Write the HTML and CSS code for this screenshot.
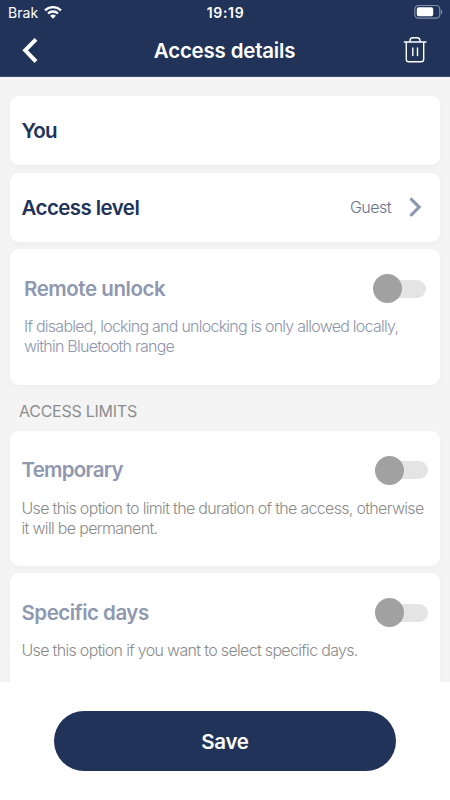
FILE: index.html
```html
<!DOCTYPE html>
<html lang="en">
<head>
<meta charset="utf-8">
<title>Access details</title>
<link rel="stylesheet" href="styles.css">
</head>
<body>
<div class="screen">
  <header class="header">
    <div class="status">
      <div class="carrier"><span>Brak</span>
        <svg class="wifi" width="18" height="14" viewBox="0 0 18 14" fill="none" stroke="#fff" stroke-width="2.3"><path d="M1 4.4a11.4 11.4 0 0 1 16 0M4 7.5a7.2 7.2 0 0 1 10 0"/><path d="M9 12.7 6.1 9.8a4.2 4.2 0 0 1 5.8 0z" fill="#fff" stroke="none"/></svg>
      </div>
      <span class="time">19:19</span>
      <svg class="battery" width="30" height="15" viewBox="0 0 30 15"><rect x="1.8" y=".5" width="25" height="12.6" rx="3.6" fill="none" stroke="#8290ad" stroke-width="1.2"/><rect x="3.8" y="2.3" width="16.4" height="9" rx="1.8" fill="#fff"/><path d="M28 4.5v4.8c1.7-.7 1.7-4.1 0-4.8z" fill="#8290ad"/></svg>
    </div>
    <div class="nav">
      <svg class="back" width="17" height="26" viewBox="0 0 17 26" fill="none" stroke="#fff" stroke-width="4"><path d="M15 1.4 4.2 12.3 15 23.5"/></svg>
      <h1 class="title">Access details</h1>
      <svg class="trash" width="24" height="27" viewBox="0 0 24 27" fill="none" stroke="#fff" stroke-width="1.4" stroke-linecap="round" stroke-linejoin="round"><path d="M1.3 5h21.7M3.3 5v17.2a2.6 2.6 0 0 0 2.6 2.6h12.2a2.6 2.6 0 0 0 2.6-2.6V5M7 4.7V3.7a3 3 0 0 1 3-3h4a3 3 0 0 1 3 3v1M9.8 11v7.5M14.5 11v7.5"/></svg>
    </div>
  </header>
  <main class="content">
    <section class="card row"><h2 class="name tight">You</h2></section>
    <section class="card row"><h2 class="name level">Access level</h2>
      <span class="value">Guest</span>
      <svg class="chevron" width="13" height="20" viewBox="0 0 13 20" fill="none" stroke="#9198b2" stroke-width="3.2" stroke-linecap="round"><path d="m2.4 2.3 7.8 7.8-7.8 7.8"/></svg>
    </section>
    <section class="card option remote">
      <div class="head"><h2 class="name muted">Remote unlock</h2><span class="switch"></span></div>
      <p class="desc blue">If disabled, locking and unlocking is only allowed locally,<br>within Bluetooth range</p>
    </section>
    <h3 class="group">ACCESS LIMITS</h3>
    <section class="card option">
      <div class="head"><h2 class="name muted tight">Temporary</h2><span class="switch"></span></div>
      <p class="desc">Use this option to limit the duration of the access, otherwise<br>it will be permanent.</p>
    </section>
    <section class="card option">
      <div class="head"><h2 class="name muted days">Specific days</h2><span class="switch"></span></div>
      <p class="desc">Use this option if you want to select specific days.</p>
    </section>
  </main>
  <footer class="footer"><button class="save">Save</button></footer>
</div>
</body>
</html>
```
FILE: styles.css
```css
* { box-sizing: border-box; }
body { margin: 0; font-family: Inter, "Liberation Sans", sans-serif; }
h1, h2, h3, p { margin: 0; }
svg { display: block; flex: none; }
.screen { width: 450px; height: 800px; display: flex; flex-direction: column; overflow: hidden; background: #f4f4f4; }
.header { flex: none; height: 77px; background: #213358; border-bottom: 1px solid #38496c; color: #fff; }
.status { height: 25px; display: grid; grid-template-columns: 1fr auto 1fr; align-items: center; padding: 0 7px 0 8px; }
.carrier { display: flex; align-items: center; gap: 6px; font-size: 14px; letter-spacing: 0.05px; }
.time { font-size: 14px; font-weight: 600; letter-spacing: 0.7px; }
.battery { justify-self: end; }
.nav { height: 51px; display: grid; grid-template-columns: 1fr auto 1fr; align-items: center; padding: 0 23px 0 21px; }
.title { font-size: 20.5px; font-weight: 600; letter-spacing: -0.2px; margin-right: -1px; }
.trash { justify-self: end; }
.content { flex: 1; min-height: 0; overflow: hidden; padding: 19px 10px 0; display: flex; flex-direction: column; gap: 7.5px; }
.card { flex: none; background: #fff; border-radius: 9px; box-shadow: 0 2px 7px rgba(0, 0, 0, 0.03); }
.row { height: 69.2px; display: flex; align-items: center; padding: 0 18px 0 11.5px; }
.name { font-size: 20.5px; line-height: 26px; font-weight: 600; color: #213358; letter-spacing: -0.45px; }
.level { letter-spacing: -0.57px; padding-top: 1px; }
.tight { letter-spacing: -0.75px; }
.days { letter-spacing: -0.5px; }
.muted { color: #8f98b0; }
.value { margin-left: auto; margin-right: 18px; font-size: 16px; font-weight: 300; letter-spacing: -0.5px; color: #66718f; }
.option { height: 135.2px; padding: 25px 12px 0 11.5px; }
.remote { padding: 25px 14px 0; }
.head { display: flex; justify-content: space-between; align-items: center; height: 29px; }
.switch { width: 53px; height: 29px; display: flex; align-items: center; position: relative; }
.switch::before { content: ""; width: 42px; height: 18px; margin-left: 11px; border-radius: 9px; background: #e4e4e4; }
.switch::after { content: ""; position: absolute; left: 0; top: 0; width: 29px; height: 29px; border-radius: 50%; background: #a1a1a1; }
.desc { margin-top: 13px; font-size: 16px; line-height: 20px; font-weight: 300; letter-spacing: -0.68px; white-space: nowrap; color: #8b8b8b; }
.blue { letter-spacing: -0.75px; color: #8d96ae; }
.group { flex: none; margin: 0 9px; height: 31.2px; padding-top: 8px; font-size: 16px; line-height: 22px; font-weight: 400; letter-spacing: -0.25px; color: #8e8e90; }
.footer { flex: none; height: 118px; background: #fff; display: flex; justify-content: center; align-items: flex-start; padding-top: 29px; }
.save { width: 342px; height: 60px; border: 0; border-radius: 30px; background: #213358; color: #fff; font: 600 20.5px Inter, sans-serif; letter-spacing: -0.3px; padding: 0 6px; }
```
